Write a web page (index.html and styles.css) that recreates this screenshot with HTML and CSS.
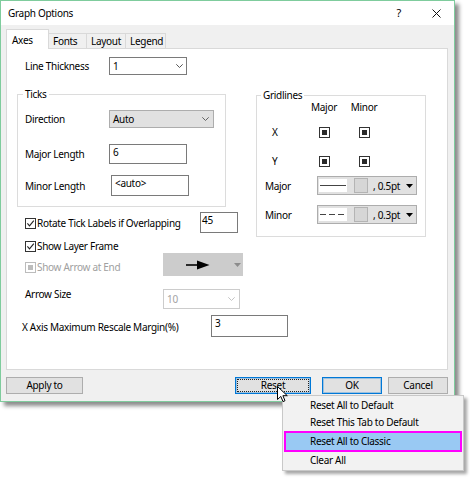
FILE: index.html
```html
<!DOCTYPE html>
<html>
<head>
<meta charset="utf-8">
<title>Graph Options</title>
<link rel="stylesheet" href="styles.css">
</head>
<body>
<div class="screen">
  <div class="window">
    <div class="titlebar">
      <span class="title">Graph Options</span>
      <span class="help">?</span>
      <svg class="close" width="9" height="9" viewBox="0 0 9 9"><path d="M0.5 0.5L8.5 8.5M8.5 0.5L0.5 8.5" stroke="#111" stroke-width="1" fill="none"/></svg>
    </div>
    <div class="client">
      <div class="tabs">
        <div class="tab active">Axes</div>
        <div class="tab w-fonts">Fonts</div>
        <div class="tab w-layout">Layout</div>
        <div class="tab w-legend">Legend</div>
      </div>
      <div class="panel">
        <div class="cols">
          <div class="col-left">
            <div class="row lt-row">
              <span class="lbl w84">Line Thickness</span>
              <div class="combo white w78"><span>1</span><svg class="chev" width="7" height="4" viewBox="0 0 7 4"><path d="M0.3 0.3L3.5 3.5L6.7 0.3" fill="none" stroke="#444" stroke-width="0.9"/></svg></div>
            </div>
            <div class="group ticks">
              <span class="gtitle">Ticks</span>
              <div class="trow dir">
                <span class="lbl w84">Direction</span>
                <div class="combo gray w105"><span>Auto</span><svg class="chev" width="7" height="4" viewBox="0 0 7 4"><path d="M0.3 0.3L3.5 3.5L6.7 0.3" fill="none" stroke="#555" stroke-width="0.9"/></svg></div>
              </div>
              <div class="trow major">
                <span class="lbl w84">Major Length</span>
                <div class="input w78 h20">6</div>
              </div>
              <div class="trow minor">
                <span class="lbl w86">Minor Length</span>
                <div class="input w78 h21">&lt;auto&gt;</div>
              </div>
            </div>
            <div class="crow rot">
              <div class="cbl w175"><span class="cb"><svg width="9" height="9" viewBox="0 0 9 9"><path d="M1.4 4.4L3.5 6.8L7.8 1.6" fill="none" stroke="#222" stroke-width="1.1"/></svg></span><span>Rotate Tick Labels if Overlapping</span></div>
              <div class="input w38 h21 tight">45</div>
            </div>
            <div class="crow frame">
              <div class="cbl"><span class="cb"><svg width="9" height="9" viewBox="0 0 9 9"><path d="M1.4 4.4L3.5 6.8L7.8 1.6" fill="none" stroke="#222" stroke-width="1.1"/></svg></span><span>Show Layer Frame</span></div>
            </div>
            <div class="crow arrowrow">
              <div class="cbl w138 disabled"><span class="cb dis"><i></i></span><span>Show Arrow at End</span></div>
              <div class="arrowcombo">
                <svg class="arrow" width="24" height="10" viewBox="0 0 24 10"><path d="M0 5H13" stroke="#000" stroke-width="1.6"/><path d="M11 0.5L23.5 5L11 9.5Z" fill="#000"/></svg>
                <svg class="tri" width="7" height="4" viewBox="0 0 7 4"><path d="M0 0H7L3.5 4Z" fill="#8c8c8c"/></svg>
              </div>
            </div>
            <div class="crow sizerow">
              <span class="lbl w138 up">Arrow Size</span>
              <div class="combo dimmed w77"><span>10</span><svg class="chev" width="7" height="4" viewBox="0 0 7 4"><path d="M0.3 0.3L3.5 3.5L6.7 0.3" fill="none" stroke="#bdbdbd" stroke-width="0.9"/></svg></div>
            </div>
          </div>
          <div class="col-right">
            <div class="group gridlines">
              <span class="gtitle">Gridlines</span>
              <div class="gl-grid gl-head"><span></span><span class="cen">Major</span><span class="cen">Minor</span></div>
              <div class="gl-grid gl-x"><span class="axis">X</span><span class="gcb"><i></i></span><span class="gcb"><i></i></span></div>
              <div class="gl-grid gl-y"><span class="axis">Y</span><span class="gcb"><i></i></span><span class="gcb"><i></i></span></div>
              <div class="gl-line gl-major">
                <span class="lbl gl-lbl">Major</span>
                <div class="linectl">
                  <span class="swatch"><svg width="28" height="13" viewBox="0 0 28 13"><path d="M1 6.5H27" stroke="#444" stroke-width="1"/></svg></span>
                  <span class="colorbox"></span>
                  <span class="lw">, 0.5pt</span>
                  <svg class="ltri" width="7" height="4" viewBox="0 0 7 4"><path d="M0 0H7L3.5 4Z" fill="#000"/></svg>
                </div>
              </div>
              <div class="gl-line gl-minor">
                <span class="lbl gl-lbl">Minor</span>
                <div class="linectl">
                  <span class="swatch"><svg width="28" height="13" viewBox="0 0 28 13"><path d="M1 6.5H27" stroke="#444" stroke-width="1" stroke-dasharray="6 3"/></svg></span>
                  <span class="colorbox"></span>
                  <span class="lw">, 0.3pt</span>
                  <svg class="ltri" width="7" height="4" viewBox="0 0 7 4"><path d="M0 0H7L3.5 4Z" fill="#000"/></svg>
                </div>
              </div>
            </div>
          </div>
        </div>
        <div class="xrow">
          <span class="lbl w189">X Axis Maximum Rescale Margin(%)</span>
          <div class="input w77 h22">3</div>
        </div>
      </div>
      <div class="buttons">
        <div class="btn b-apply">Apply to</div>
        <div class="btn b-reset"><span class="focus">Reset</span></div>
        <div class="btn b-ok">OK</div>
        <div class="btn b-cancel">Cancel</div>
      </div>
    </div>
  </div>

  <div class="menu">
    <div class="mi">Reset All to Default</div>
    <div class="mi">Reset This Tab to Default</div>
    <div class="mi hl">Reset All to Classic</div>
    <div class="mi">Clear All</div>
  </div>

  <svg class="cursor" width="12" height="17" viewBox="0 0 12 17"><path d="M0.5 0.5V13.5L3.8 10.4L6 15.6L8 14.7L5.9 9.7H10.3Z" fill="#fff" stroke="#000" stroke-width="1" stroke-linejoin="round"/></svg>
</div>
</body>
</html>
```

FILE: styles.css
```css
* { box-sizing: border-box; }
html, body { margin: 0; padding: 0; background: #fff; }
body {
  font-family: "Noto Sans", "Open Sans", sans-serif;
  font-size: 10px;
  letter-spacing: -0.3px;
  line-height: 14px;
  color: #000;
}
.screen { position: relative; width: 470px; height: 479px; overflow: hidden; background: #fff; }

.window {
  width: 455px;
  height: 402px;
  border: 1px solid #7fcc9d;
  background: #f0f0f0;
  box-shadow: 4px 4px 4px rgba(0, 0, 0, 0.45);
}
.titlebar { height: 24px; background: #fff; display: flex; align-items: center; padding-left: 7px; }
.title { flex: 1; }
.help { margin-right: 31px; font-size: 11px; }
.close { margin-right: 13px; }

.client { padding: 4px 6px 0 5px; }
.tabs { display: flex; align-items: flex-end; height: 19px; }
.tab {
  height: 15px;
  border: 1px solid #d9d9d9;
  border-bottom: 0;
  background: #f0f0f0;
  padding-left: 4px;
  line-height: 14px;
  margin-left: -1px;
}
.tab.active {
  position: relative;
  z-index: 1;
  height: 20px;
  width: 43px;
  margin-left: 0;
  margin-bottom: -1px;
  background: #fff;
  padding: 3px 0 0 5px;
}
.w-fonts { width: 39px; }
.w-layout { width: 40px; }
.w-legend { width: 41px; }

.panel {
  height: 322px;
  background: #fff;
  border: 1px solid #d9d9d9;
  padding: 8px 0 0 10px;
}
.cols { display: flex; }
.col-left { width: 239px; }
.col-right { width: 170px; }

.row, .trow, .crow { display: flex; align-items: center; }
.lt-row { margin-left: 8px; height: 18px; }
.lbl { display: block; }
.w84 { width: 84px; }
.w86 { width: 86px; }
.w138 { width: 138px; }
.w175 { width: 175px; }
.w189 { width: 189px; }

.combo {
  display: flex;
  align-items: center;
  justify-content: space-between;
  height: 18px;
  border: 1px solid #7a7a7a;
  background: #fff;
  padding: 0 4px 0 3px;
}
.combo.white { padding-right: 3px; }
.combo.gray { background: #e1e1e1; border-color: #adadad; }
.combo.dimmed { height: 20px; border-color: #cccccc; color: #a3a3a3; }
.w78 { width: 78px; }
.w105 { width: 105px; }
.w77 { width: 77px; }
.w38 { width: 38px; }

.input {
  border: 1px solid #7a7a7a;
  background: #fff;
  padding: 1px 0 0 3px;
  line-height: 12px;
}
.input.tight { padding-left: 1px; }
.h20 { height: 20px; }
.h21 { height: 21px; }
.h22 { height: 22px; }

.group { border: 1px solid #dcdcdc; }
.gtitle {
  display: block;
  width: fit-content;
  margin: -8px 0 0 -2px;
  padding: 0 2px;
  background: #fff;
  line-height: 14px;
}
.ticks { width: 209px; margin-top: 19px; padding: 0 0 10px 7px; }
.dir { margin-top: 9px; height: 18px; }
.major { margin-top: 16px; height: 20px; }
.minor { margin-top: 11px; height: 21px; }
.minor .input { margin-left: 0; }

.crow { margin-left: 8px; }
.cbl { display: flex; align-items: center; gap: 1px; }
.cb {
  display: block;
  width: 11px;
  height: 11px;
  border: 1px solid #333;
  background: #fff;
}
.cb svg { display: block; }
.cb.dis { border-color: #bcbcbc; padding: 2px; }
.cb.dis i { display: block; width: 5px; height: 5px; background: #bcbcbc; }
.disabled { color: #a0a0a0; }

.rot { margin-top: 5px; height: 21px; align-items: flex-start; }
.rot .cbl { padding-top: 4px; }
.frame { margin-top: 6px; height: 14px; }
.arrowrow { height: 23px; align-items: flex-start; }
.arrowrow .cbl { padding-top: 7px; }
.arrowcombo {
  display: flex;
  align-items: center;
  width: 80px;
  height: 23px;
  background: #cccccc;
  padding: 0 2px 0 23px;
}
.arrowcombo .tri { margin-left: auto; }
.sizerow { margin-top: 13px; height: 20px; }
.lbl.up { align-self: flex-start; margin-top: -2px; }

.gridlines { margin-top: 38px; width: 170px; padding-bottom: 12px; }
.gridlines .gtitle { margin-left: 4px; }
.gl-grid { display: grid; grid-template-columns: 47px 40px 40px; height: 14px; align-items: center; }
.gl-head { margin-top: -2px; }
.cen { justify-self: center; }
.gl-x { margin-top: 11px; }
.gl-y { margin-top: 15px; }
.axis { padding-left: 15px; }
.gcb {
  justify-self: center;
  display: block;
  width: 11px;
  height: 11px;
  border: 1px solid #333;
  padding: 2px;
  background: #fff;
}
.gcb i { display: block; width: 5px; height: 5px; background: #2a2a2a; }

.gl-line { display: flex; align-items: center; height: 19px; }
.gl-major { margin-top: 8px; }
.gl-minor { margin-top: 10px; }
.gl-lbl { width: 60px; padding-left: 8px; }
.linectl {
  display: flex;
  align-items: center;
  width: 100px;
  height: 19px;
  border: 1px solid #adadad;
  background: #e1e1e1;
  padding-left: 1px;
}
.swatch { display: block; width: 28px; height: 13px; background: #fff; }
.swatch svg { display: block; }
.colorbox {
  display: block;
  width: 14px;
  height: 15px;
  margin-left: 7px;
  background: #d6d6d6;
  border: 1px solid #b4b4b4;
}
.lw { margin-left: 5px; }
.ltri { margin-left: 6px; }

.xrow { display: flex; align-items: center; margin: 6px 0 0 5px; height: 22px; }
.xrow .lbl { padding-top: 2px; }

.buttons { display: flex; margin-top: 7px; }
.btn {
  height: 17px;
  border: 1px solid #adadad;
  background: #e1e1e1;
  text-align: center;
  line-height: 15px;
}
.b-apply { width: 77px; margin-right: auto; }
.b-reset { width: 76px; border-color: #0078d7; padding: 1px; box-shadow: inset 0 0 0 1px rgba(0, 120, 215, 0.3); }
.focus { display: block; height: 13px; border: 1px dotted #222; line-height: 11px; }
.b-ok { width: 60px; margin-left: 11px; border-color: #0078d7; box-shadow: inset 0 0 0 1px rgba(0, 120, 215, 0.3); }
.b-cancel { width: 60px; margin-left: 6px; }

.menu {
  position: absolute;
  left: 282px;
  top: 395px;
  width: 182px;
  height: 76px;
  border: 1px solid #c8c8c8;
  background: #f2f2f2;
  padding: 1px;
  box-shadow: 3px 3px 3px rgba(0, 0, 0, 0.35);
}
.mi { height: 17px; line-height: 17px; padding-left: 26px; }
.mi.hl {
  height: 21px;
  border: 2px solid #ff00ff;
  background: #99c9f3;
  padding-left: 24px;
}
.cursor { position: absolute; left: 277px; top: 386px; }
```
